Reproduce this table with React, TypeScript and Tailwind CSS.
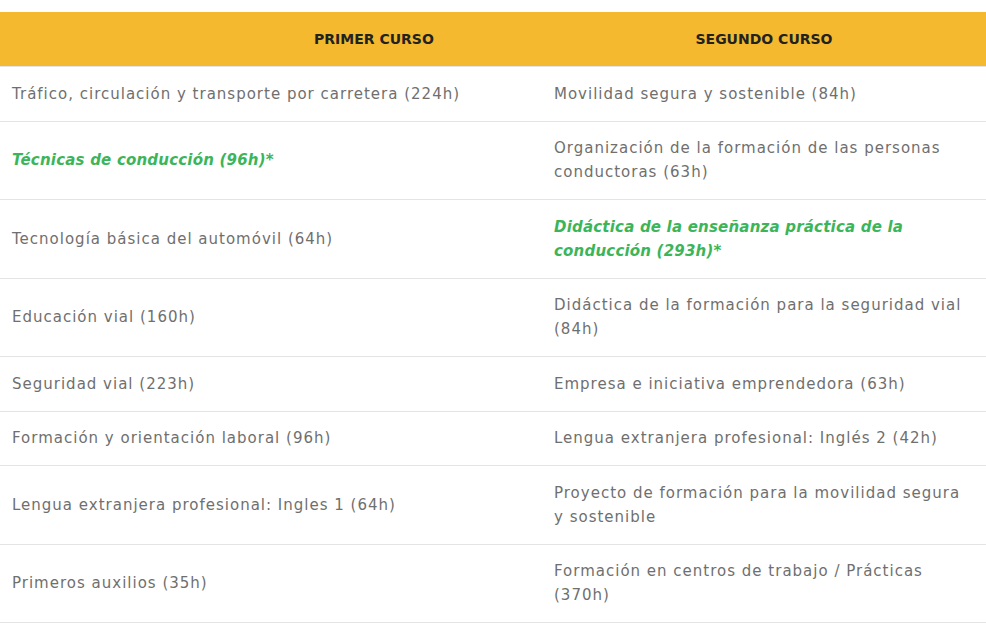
import React from "react";

type Cell = { text: string; green?: boolean };

const rows: [Cell, Cell][] = [
  [{ text: "Tráfico, circulación y transporte por carretera (224h)" }, { text: "Movilidad segura y sostenible (84h)" }],
  [{ text: "Técnicas de conducción (96h)*", green: true }, { text: "Organización de la formación de las personas conductoras (63h)" }],
  [{ text: "Tecnología básica del automóvil (64h)" }, { text: "Didáctica de la enseñanza práctica de la conducción (293h)*", green: true }],
  [{ text: "Educación vial (160h)" }, { text: "Didáctica de la formación para la seguridad vial (84h)" }],
  [{ text: "Seguridad vial (223h)" }, { text: "Empresa e iniciativa emprendedora (63h)" }],
  [{ text: "Formación y orientación laboral (96h)" }, { text: "Lengua extranjera profesional: Inglés 2 (42h)" }],
  [{ text: "Lengua extranjera profesional: Ingles 1 (64h)" }, { text: "Proyecto de formación para la movilidad segura y sostenible" }],
  [{ text: "Primeros auxilios (35h)" }, { text: "Formación en centros de trabajo / Prácticas (370h)" }],
];

const CellView = ({ cell }: { cell: Cell }) => (
  <div className="flex items-center px-3 py-[14.75px]">
    <span
      className={
        cell.green
          ? "text-[15px] leading-6 tracking-[0.2px] font-bold italic text-[#3cb55a]"
          : "text-[15px] leading-6 tracking-[1px] font-medium text-[#6f6f6f]"
      }
    >
      {cell.text}
    </span>
  </div>
);

export default function App() {
  return (
    <div className="min-h-screen bg-white pt-3 font-['DejaVu_Sans',sans-serif]">
      <div className="grid grid-cols-[542px_444px] bg-[#f4b92e] border-b border-[#e4e4e4] h-[55px]">
        <div className="flex items-center pl-[314px] text-[14px] font-bold text-[#222]">PRIMER CURSO</div>
        <div className="flex items-center justify-center text-[14px] font-bold text-[#222]">SEGUNDO CURSO</div>
      </div>
      {rows.map((r, i) => (
        <div key={i} className="grid grid-cols-[542px_444px] border-b border-[#e4e4e4]">
          <CellView cell={r[0]} />
          <CellView cell={r[1]} />
        </div>
      ))}
    </div>
  );
}
